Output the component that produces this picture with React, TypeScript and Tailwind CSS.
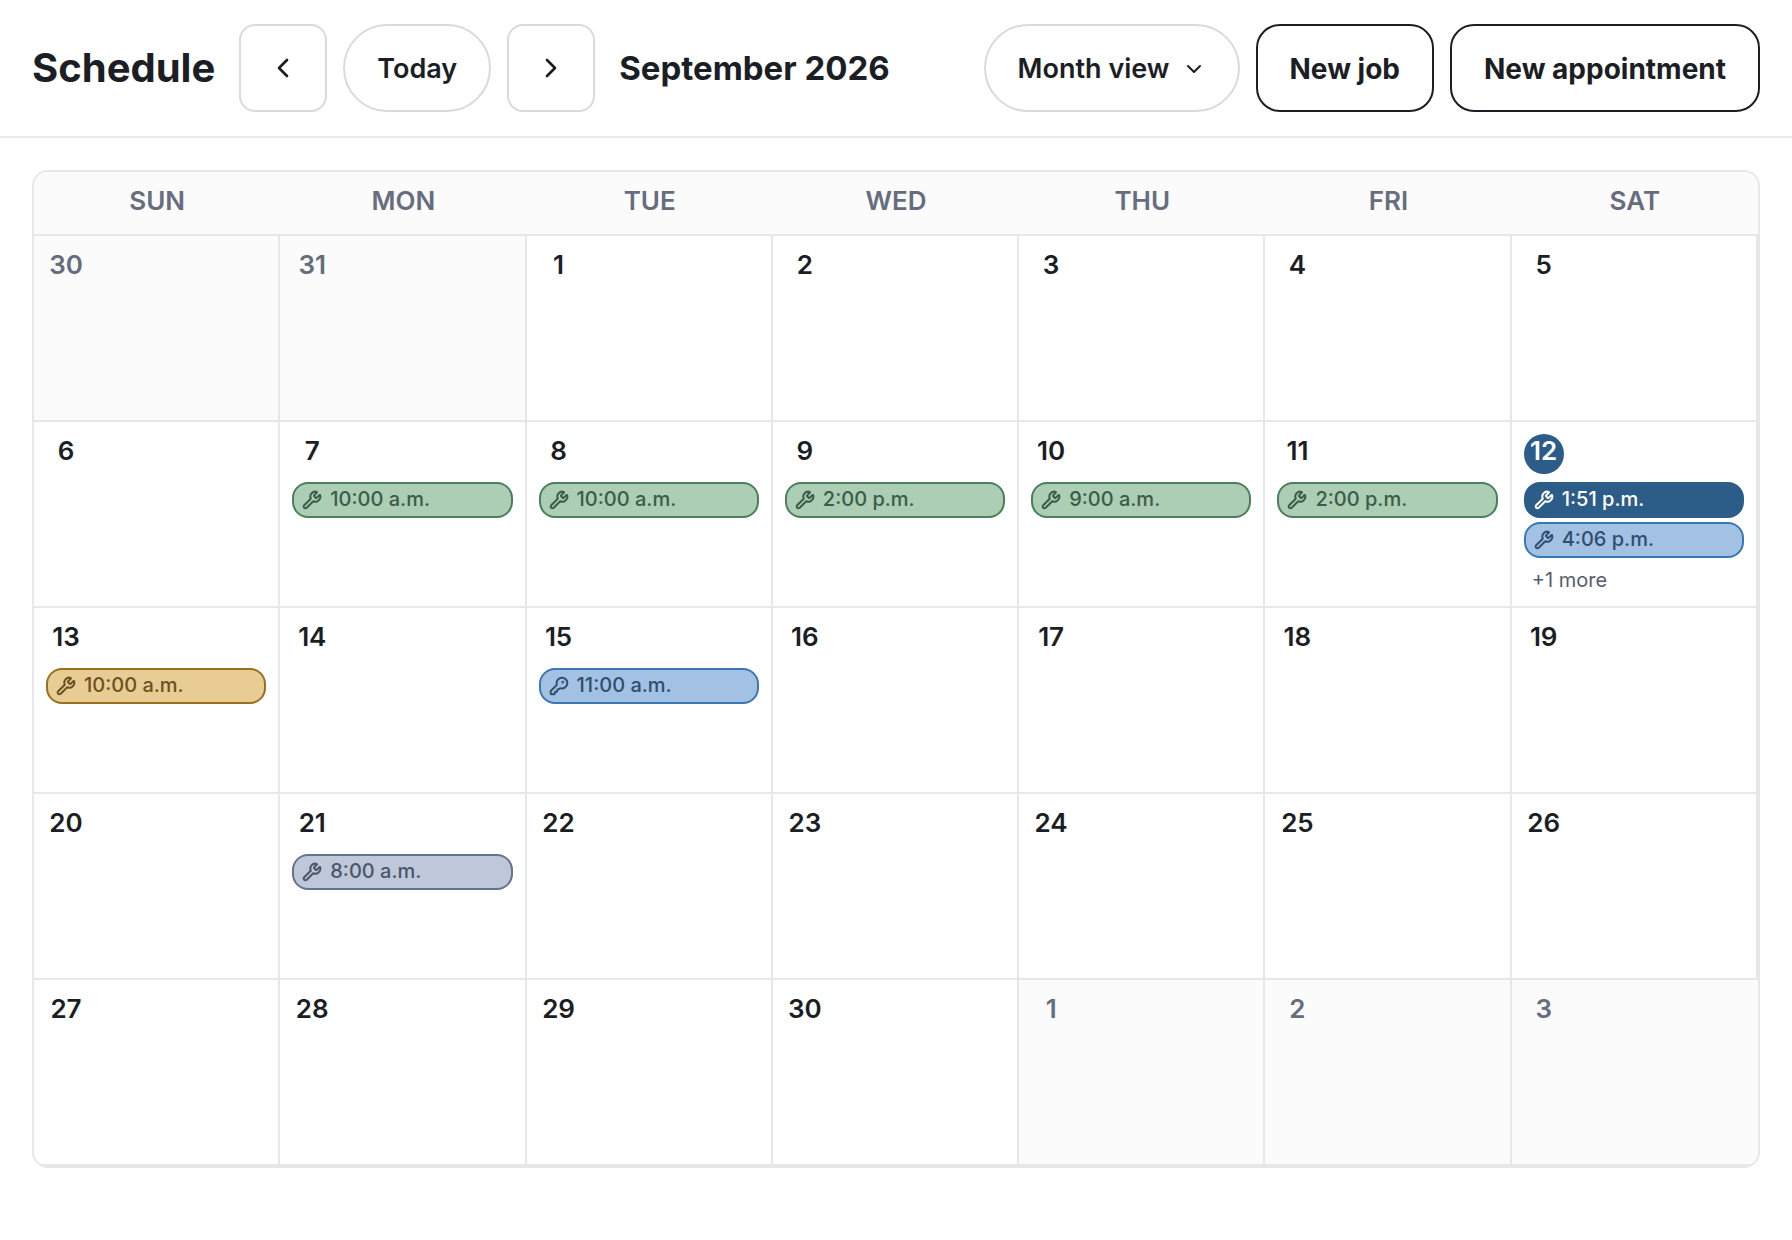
import { ChevronDown, ChevronLeft, ChevronRight, KeyRound, Wrench } from 'lucide-react';

type Tone = 'green' | 'navy' | 'blue' | 'amber' | 'slate';

interface Job {
  time: string;
  tone: Tone;
  icon?: 'wrench' | 'key';
}

interface Day {
  date: number;
  outside?: boolean;
  today?: boolean;
  jobs?: Job[];
  more?: number;
}

const WEEKDAYS = ['Sun', 'Mon', 'Tue', 'Wed', 'Thu', 'Fri', 'Sat'];

const TONES: Record<Tone, string> = {
  green: 'border-[#4b7f5e] bg-[#abceb5] text-[#3b5c47]',
  navy: 'border-[#2c5c88] bg-[#2c5c88] text-white',
  blue: 'border-[#3b76b5] bg-[#a3c1e2] text-[#2f4f70]',
  amber: 'border-[#96701f] bg-[#e8cc94] text-[#6b5222]',
  slate: 'border-[#66738e] bg-[#bec8d9] text-[#4b566b]',
};

const WEEKS: Day[][] = [
  [
    { date: 30, outside: true },
    { date: 31, outside: true },
    { date: 1 },
    { date: 2 },
    { date: 3 },
    { date: 4 },
    { date: 5 },
  ],
  [
    { date: 6 },
    { date: 7, jobs: [{ time: '10:00 a.m.', tone: 'green' }] },
    { date: 8, jobs: [{ time: '10:00 a.m.', tone: 'green' }] },
    { date: 9, jobs: [{ time: '2:00 p.m.', tone: 'green' }] },
    { date: 10, jobs: [{ time: '9:00 a.m.', tone: 'green' }] },
    { date: 11, jobs: [{ time: '2:00 p.m.', tone: 'green' }] },
    {
      date: 12,
      today: true,
      jobs: [
        { time: '1:51 p.m.', tone: 'navy' },
        { time: '4:06 p.m.', tone: 'blue' },
      ],
      more: 1,
    },
  ],
  [
    { date: 13, jobs: [{ time: '10:00 a.m.', tone: 'amber' }] },
    { date: 14 },
    { date: 15, jobs: [{ time: '11:00 a.m.', tone: 'blue', icon: 'key' }] },
    { date: 16 },
    { date: 17 },
    { date: 18 },
    { date: 19 },
  ],
  [
    { date: 20 },
    { date: 21, jobs: [{ time: '8:00 a.m.', tone: 'slate' }] },
    { date: 22 },
    { date: 23 },
    { date: 24 },
    { date: 25 },
    { date: 26 },
  ],
  [
    { date: 27 },
    { date: 28 },
    { date: 29 },
    { date: 30 },
    { date: 1, outside: true },
    { date: 2, outside: true },
    { date: 3, outside: true },
  ],
];

function JobPill({ job }: { job: Job }) {
  const Icon = job.icon === 'key' ? KeyRound : Wrench;

  return (
    <button
      type="button"
      className={`flex h-9 w-full items-center gap-2 rounded-2xl border-2 px-2 text-left text-[20px] leading-6 font-medium ${TONES[job.tone]}`}
    >
      <Icon className="size-5 shrink-0" strokeWidth={2.4} />
      <span className="truncate pb-0.5">{job.time}</span>
    </button>
  );
}

function DayCell({ day, lastCell }: { day: Day; lastCell: boolean }) {
  return (
    <td
      className={`h-[186px] border-b-2 border-[#e6e7eb] p-3 align-top ${lastCell ? '' : 'border-r-2'} ${
        day.outside ? 'bg-[#fbfbfc]' : 'bg-white'
      }`}
    >
      <div
        className={`size-10 rounded-full text-center text-[26px] leading-[34px] font-semibold ${
          day.today ? 'bg-[#2c5c88] text-white' : day.outside ? 'text-[#656d7e]' : 'text-[#1b1e25]'
        }`}
      >
        {day.date}
      </div>
      {day.jobs && (
        <div className="mt-2 flex flex-col gap-1">
          {day.jobs.map((job) => (
            <JobPill key={job.time} job={job} />
          ))}
          {day.more && (
            <button type="button" className="px-2 pt-1 text-left text-[20px] leading-7 text-[#565d6b]">
              +{day.more} more
            </button>
          )}
        </div>
      )}
    </td>
  );
}

export default function App() {
  return (
    <div className="min-h-screen bg-white font-['Inter','Liberation_Sans',sans-serif] text-[#1b1e25]">
      {/* Toolbar */}
      <header className="flex items-center gap-4 border-b-2 border-[#e6e7eb] px-8 py-6">
        <h1 className="mr-2 text-[40px] leading-[48px] font-bold">Schedule</h1>
        <button
          type="button"
          aria-label="Previous month"
          className="flex size-[88px] items-center justify-center rounded-2xl border-2 border-[#d8dade]"
        >
          <ChevronLeft className="size-8" />
        </button>
        <button
          type="button"
          className="h-[88px] rounded-full border-2 border-[#d8dade] px-8 pt-0.5 text-[27px] font-semibold"
        >
          Today
        </button>
        <button
          type="button"
          aria-label="Next month"
          className="flex size-[88px] items-center justify-center rounded-2xl border-2 border-[#d8dade]"
        >
          <ChevronRight className="size-8" />
        </button>
        <h2 className="ml-2 text-[33px] leading-10 font-bold">September 2026</h2>

        <div className="ml-auto flex items-center gap-4">
          <button
            type="button"
            aria-haspopup="menu"
            className="flex h-[88px] items-center gap-3 rounded-full border-2 border-[#d8dade] px-8 pt-0.5 text-[27px] font-semibold"
          >
            Month view
            <ChevronDown className="size-6" />
          </button>
          <button
            type="button"
            className="h-[88px] rounded-3xl border-2 border-[#1b1e25] px-8 pt-0.5 text-[28px] font-bold"
          >
            New job
          </button>
          <button
            type="button"
            className="h-[88px] rounded-3xl border-2 border-[#1b1e25] px-8 pt-0.5 text-[28px] font-bold"
          >
            New appointment
          </button>
        </div>
      </header>

      {/* Month grid */}
      <main className="p-8">
        <div className="overflow-hidden rounded-2xl border-2 border-[#e6e7eb]">
          <table className="w-full table-fixed border-separate border-spacing-0">
            <thead>
              <tr>
                {WEEKDAYS.map((name) => (
                  <th
                    key={name}
                    scope="col"
                    className="h-16 border-b-2 border-[#e6e7eb] bg-[#fbfbfc] pb-1 text-[26px] leading-8 font-semibold text-[#656d7e] uppercase"
                  >
                    {name}
                  </th>
                ))}
              </tr>
            </thead>
            <tbody>
              {WEEKS.map((week, row) => (
                <tr key={row}>
                  {week.map((day, col) => (
                    <DayCell key={col} day={day} lastCell={row === WEEKS.length - 1 && col === week.length - 1} />
                  ))}
                </tr>
              ))}
            </tbody>
          </table>
        </div>
      </main>
    </div>
  );
}
